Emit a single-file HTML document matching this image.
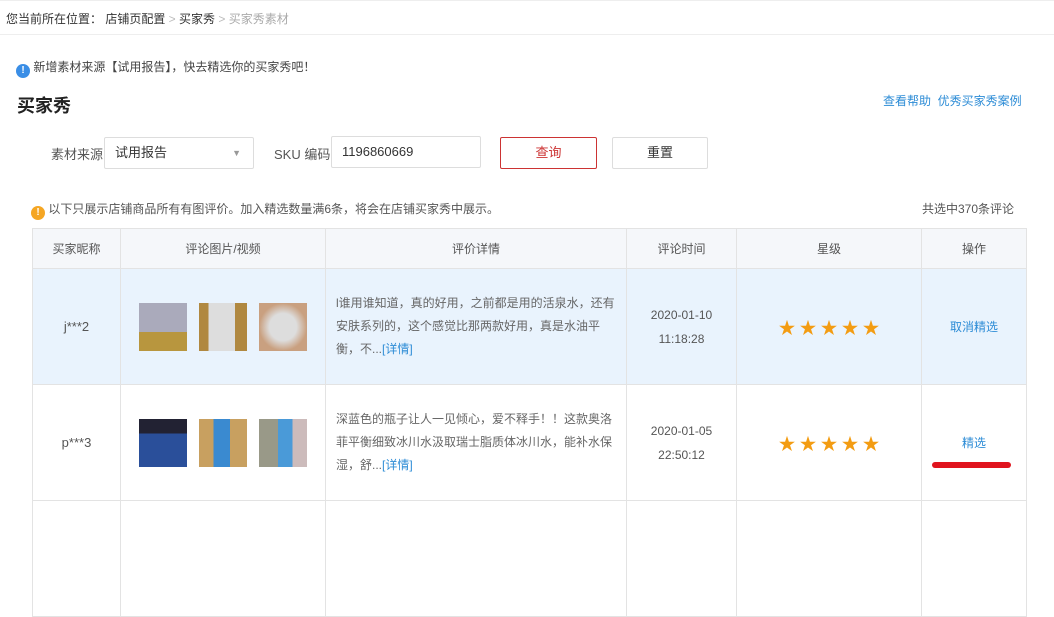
<!DOCTYPE html>
<html><head><meta charset="utf-8"><style>
*{margin:0;padding:0;box-sizing:border-box}
body{width:1054px;height:522px;overflow:hidden;background:#fff;font-family:"Liberation Sans","Noto Sans CJK SC",sans-serif;font-size:12px;color:#333;position:relative}
.a{position:absolute;white-space:nowrap}
.bc{left:0;top:0;width:1054px;height:35px;border-bottom:1px solid #eee;border-top:1px solid #eee;padding:9px 6px;font-size:12px}
.ic{display:inline-block;width:14px;height:14px;border-radius:50%;color:#fff;font-size:10px;text-align:center;line-height:14px;font-weight:bold;vertical-align:-2px}
.box{border:1px solid #ddd;border-radius:2px;height:32px;line-height:30px;padding-left:10px;font-size:13px}
table{position:absolute;left:32px;top:228px;border-collapse:collapse;font-size:12px}
td,th{border:1px solid #e3e3e3;text-align:center;vertical-align:middle;font-weight:normal}
th{height:40px;background:#f5f7fa;color:#555}
tr.r td{height:116px}
.hl td{background:#e9f3fd}
.im{display:inline-block;width:48px;height:48px;margin:0 6px;vertical-align:middle}
.txt{text-align:left;padding:0 10px;line-height:23px;color:#666;white-space:normal}
.lk{color:#2d8cd6}
.st{color:#f39c12;font-size:17px;letter-spacing:4px;padding-left:4px}
</style></head><body>
<div class="a bc">您当前所在位置： 店铺页配置 <span style="color:#bbb">&gt;</span> 买家秀 <span style="color:#bbb">&gt;</span> <span style="color:#aaa">买家秀素材</span></div>
<div class="a" style="left:16px;top:58px;font-size:12px;color:#444"><span class="ic" style="background:#3a8ee6">!</span> 新增素材来源【试用报告】，快去精选你的买家秀吧！</div>
<div class="a" style="left:17px;top:92px;font-size:18px;font-weight:bold;color:#222">买家秀</div>
<div class="a lk" style="left:883px;top:92px;font-size:12px">查看帮助 &nbsp;优秀买家秀案例</div>
<div class="a" style="left:51px;top:144px;font-size:13px;color:#555">素材来源</div>
<div class="a box" style="left:104px;top:137px;width:150px">试用报告<span style="position:absolute;right:12px;top:0;color:#999;font-size:9px">▼</span></div>
<div class="a" style="left:274px;top:144px;font-size:13px;color:#555">SKU 编码</div>
<div class="a box" style="left:331px;top:136px;width:150px">1196860669</div>
<div class="a box" style="left:500px;top:137px;width:97px;border-color:#c33;text-align:center;padding:0;color:#c33">查询</div>
<div class="a box" style="left:612px;top:137px;width:96px;text-align:center;padding:0">重置</div>
<div class="a" style="left:31px;top:200px;font-size:12px;color:#555"><span class="ic" style="background:#f5a623">!</span> 以下只展示店铺商品所有有图评价。加入精选数量满6条，将会在店铺买家秀中展示。</div>
<div class="a" style="left:922px;top:200px;font-size:12px;color:#555">共选中370条评论</div>
<table>
<tr><th style="width:88px">买家昵称</th><th style="width:205px">评论图片/视频</th><th style="width:301px">评价详情</th><th style="width:110px">评论时间</th><th style="width:185px">星级</th><th style="width:105px">操作</th></tr>
<tr class="r hl"><td style="font-size:13px;color:#555">j***2</td><td><span class="im" style="background:linear-gradient(#aab 0 60%,#b8963e 60%)"></span><span class="im" style="background:linear-gradient(90deg,#b08840 20%,#ddd 20% 75%,#b08840 75%)"></span><span class="im" style="background:radial-gradient(#ddd 40%,#c9a080 70%)"></span></td><td class="txt">l谁用谁知道，真的好用，之前都是用的活泉水，还有安肤系列的，这个感觉比那两款好用，真是水油平衡，不...<span class="lk">[详情]</span></td><td style="line-height:24px;color:#555">2020-01-10<br>11:18:28</td><td class="st">★★★★★</td><td class="lk">取消精选</td></tr>
<tr class="r"><td style="font-size:13px;color:#555">p***3</td><td><span class="im" style="background:linear-gradient(#223 0 30%,#2a4f9a 30%)"></span><span class="im" style="background:linear-gradient(90deg,#c8a060 30%,#3a8ad0 30% 65%,#c8a060 65%)"></span><span class="im" style="background:linear-gradient(90deg,#998 40%,#4a9ad8 40% 70%,#cbb 70%)"></span></td><td class="txt">深蓝色的瓶子让人一见倾心，爱不释手！！这款奥洛菲平衡细致冰川水汲取瑞士脂质体冰川水，能补水保湿，舒...<span class="lk">[详情]</span></td><td style="line-height:24px;color:#555">2020-01-05<br>22:50:12</td><td class="st">★★★★★</td><td class="lk" style="position:relative">精选<div style="position:absolute;left:10px;top:77px;width:79px;height:6px;background:#e0141e;border-radius:3px"></div></td></tr>
<tr class="r"><td></td><td></td><td></td><td></td><td></td><td></td></tr>
</table>
</body></html>
